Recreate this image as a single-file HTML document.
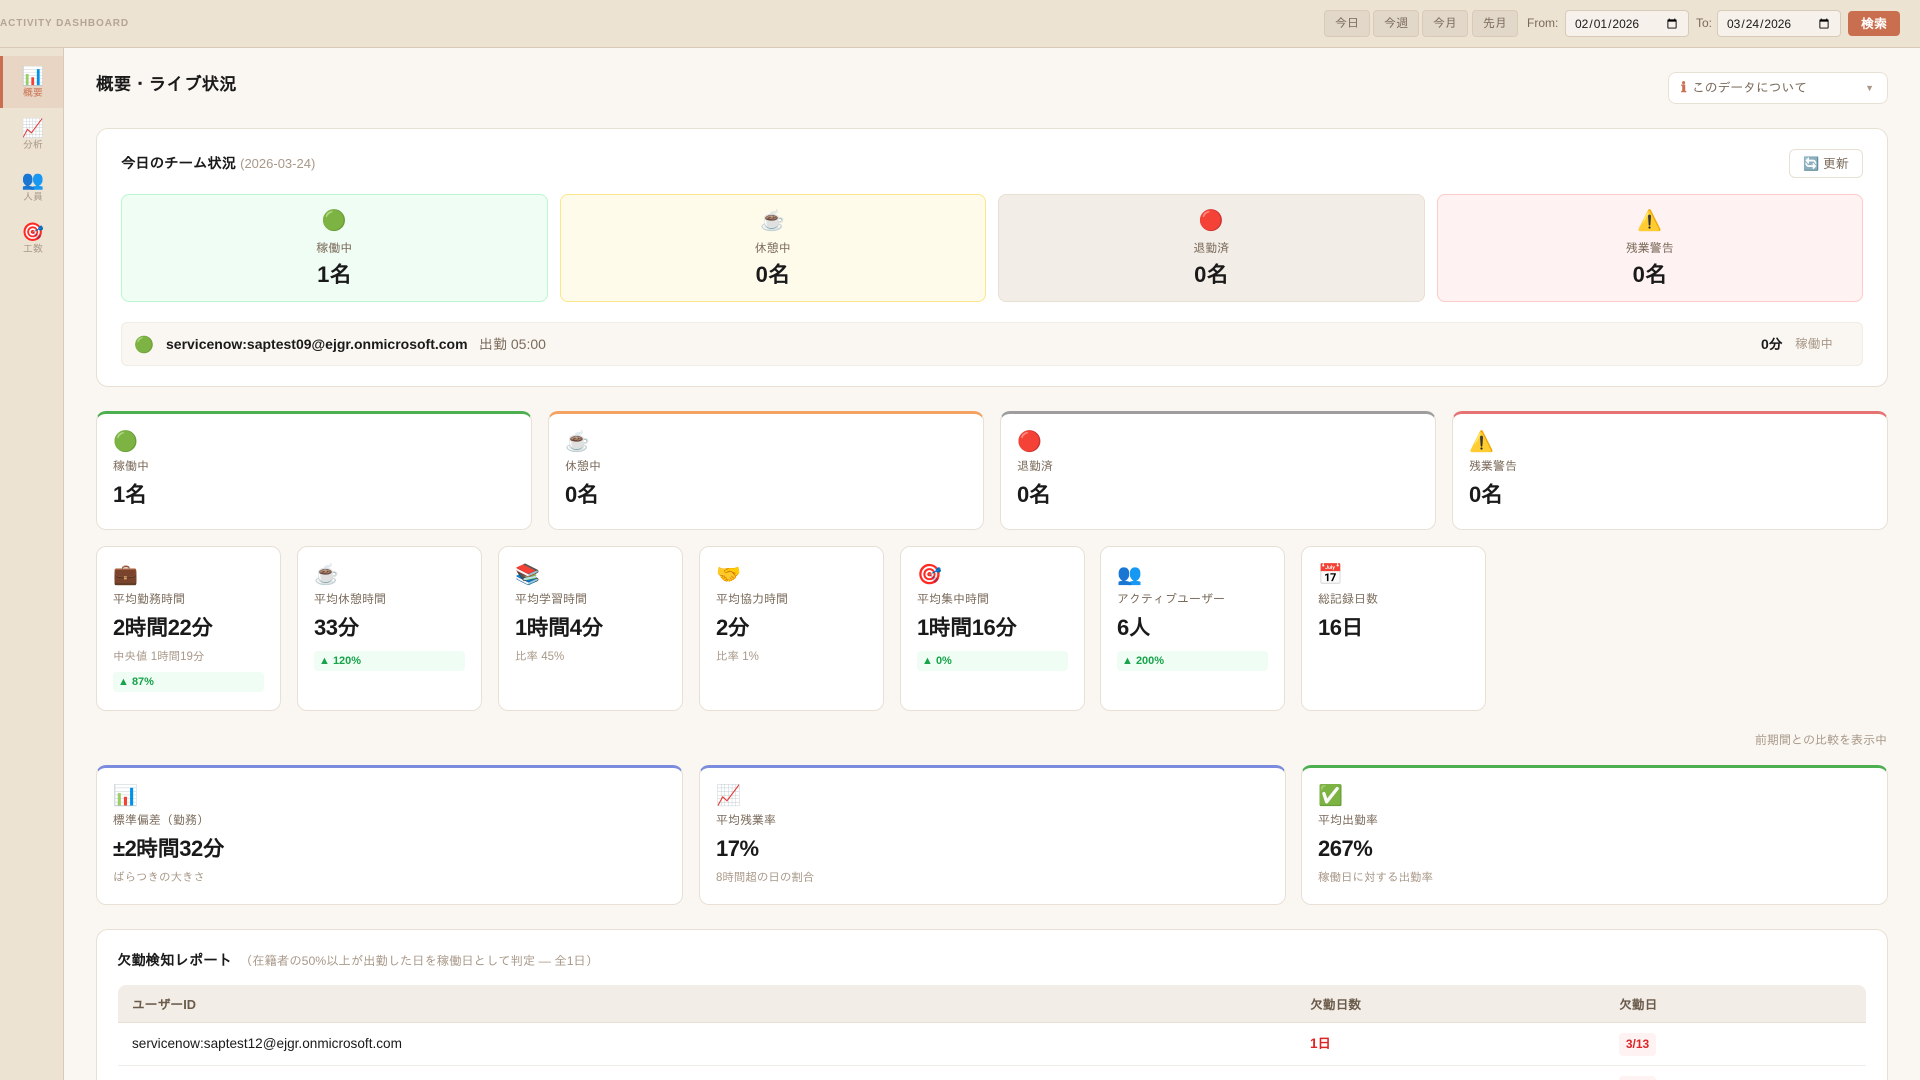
<!DOCTYPE html>
<html lang="ja"><head><meta charset="utf-8"><title>Activity Dashboard</title>
<style>
*{box-sizing:border-box;margin:0;padding:0}
html,body{width:1920px;height:1080px;overflow:hidden;background:#faf7f2}
body{font-family:"Liberation Sans","IPAGothic","WenQuanYi Zen Hei",sans-serif;color:#1a1a1a;position:relative}
.top{position:absolute;left:0;top:0;width:1920px;height:48px;background:#ede3d3;border-bottom:1px solid #d9cbb8}
.brand{position:absolute;left:0;top:17px;font-size:10px;line-height:13px;font-weight:700;letter-spacing:.88px;color:#b5a594}
.qb{position:absolute;top:10px;width:46px;height:27px;background:#e2d8c9;border:1px solid #d9cbb8;border-radius:4px;font-size:12px;line-height:25px;text-align:center;color:#7a6a5a}
.lbl{position:absolute;top:16px;font-size:12px;line-height:15px;color:#7a6a5a}
input[type=date]{position:absolute;top:10px;width:124px;height:27px;background:#f6f1ea;border:1px solid #d9cbb8;border-radius:4px;font:12px "Liberation Sans",sans-serif;color:#1a1a1a;padding:4px 8px}
.go{position:absolute;left:1848px;top:11px;width:52px;height:25px;background:#c96f4f;border-radius:4px;color:#fff;font-size:12.8px;font-weight:700;line-height:25px;text-align:center}
.side{position:absolute;left:0;top:48px;width:64px;height:1032px;background:#ede3d3;border-right:1px solid #d9cbb8}
.nav{position:absolute;left:0;width:63px;height:52px;text-align:center;color:#a89888;font-size:10px;border-left:3px solid transparent}
.nav.on{background:#e8d5c4;border-left-color:#c96f4f;color:#c96f4f;font-weight:600}
.nav i{display:block;font-style:normal;font-size:18px;line-height:24px;padding-top:8px;height:32px}
.nav span{display:block;line-height:12px;margin-top:0}
.h1{position:absolute;left:96px;top:72px;font-size:17.6px;line-height:24px;font-weight:700}
.info{position:absolute;left:1668px;top:72px;width:220px;height:32px;background:#fff;border:1px solid #e8e0d5;border-radius:8px;font-size:12.8px;line-height:30px;color:#7a6a5a}
.info b{position:absolute;left:12px;color:#c96f4f;font-family:"DejaVu Serif",serif;font-size:14px}
.info span{position:absolute;left:23px}
.info em{position:absolute;right:13px;top:0;font-style:normal;font-size:9px;color:#a89888}
.card{position:absolute;background:#fff;border:1px solid #e8e0d5;border-radius:12px}
.t{position:absolute;font-size:14.4px;font-weight:700;line-height:18px}
.t small{font-size:13px;font-weight:400;color:#a89888}
.upd{position:absolute;left:1789px;top:149px;width:74px;height:29px;background:#fff;border:1px solid #e8e0d5;border-radius:6px;font-size:13px;line-height:27px;text-align:center;color:#7a6a5a}
.tile{position:absolute;top:194px;height:108px;width:426.5px;border-radius:8px;border:1px solid;text-align:center}
.tile i{display:block;font-style:normal;font-size:20px;line-height:26px;margin-top:13px;height:29px}
.tile p{font-size:12px;line-height:15px;color:#7a6a5a;margin-top:4px}
.tile div{font-size:22px;font-weight:700;line-height:26px;margin-top:6px}
.row{position:absolute;left:121px;top:322px;width:1742px;height:44px;background:#faf7f2;border:1px solid #f1ece5;border-radius:6px}
.row span{position:absolute;top:13px;line-height:17px;font-size:14px}
.c{position:absolute;background:#fff;border:1px solid #e8e0d5;border-radius:10px;padding:16px}
.c.bar{border-top:3px solid}
.c i{display:block;font-style:normal;font-size:20px;line-height:24px;height:28px}
.c p{font-size:12px;line-height:15px;color:#7a6a5a;margin-top:1px}
.c h3{font-size:22px;letter-spacing:-.5px;line-height:29px;font-weight:700;margin-top:6px}
.c small{display:block;font-size:11.5px;line-height:13px;color:#a89888;margin-top:9px}
.tr{display:block;height:20px;border-radius:4px;background:#f0fdf4;color:#16a34a;font-size:11px;font-weight:700;line-height:20px;padding-left:5px;margin-top:9px}
.c small + .tr{margin-top:8px}
.note{position:absolute;right:33px;top:733px;font-size:12px;line-height:15px;color:#a89888}
.th{position:absolute;left:118px;top:985px;width:1748px;height:38px;background:#f2ede6;border-bottom:1px solid #e8e0d5;border-radius:8px 8px 0 0}
.th b,.cell{position:absolute;font-size:12.8px;line-height:15px}
.th b{top:12px;color:#6b5b4b}
.line{position:absolute;left:118px;top:1065px;width:1748px;height:1px;background:#efebe6}
.bad{position:absolute;left:1619px;width:37px;height:23px;background:#fef2f2;border-radius:4px;color:#dc2626;font-size:12px;font-weight:700;line-height:23px;text-align:center}
</style></head><body>
<div class="top">
<div class="brand">ACTIVITY DASHBOARD</div>
<div class="qb" style="left:1324px">今日</div><div class="qb" style="left:1373px">今週</div><div class="qb" style="left:1422px">今月</div><div class="qb" style="left:1472px">先月</div>
<div class="lbl" style="left:1527px">From:</div>
<input type="date" value="2026-02-01" style="left:1565px">
<div class="lbl" style="left:1696px">To:</div>
<input type="date" value="2026-03-24" style="left:1717px">
<div class="go">検索</div>
</div>
<div class="side">
<div class="nav on" style="top:8px"><i>📊</i><span>概要</span></div>
<div class="nav" style="top:60px"><i>📈</i><span>分析</span></div>
<div class="nav" style="top:112px"><i>👥</i><span>人員</span></div>
<div class="nav" style="top:164px"><i>🎯</i><span>工数</span></div>
</div>
<div class="h1">概要・ライブ状況</div>
<div class="info"><b>&#x2139;&#xFE0E;</b><span>このデータについて</span><em>▼</em></div>

<div class="card" style="left:96px;top:128px;width:1792px;height:259px"></div>
<div class="t" style="left:121px;top:155px">今日のチーム状況 <small>(2026-03-24)</small></div>
<div class="upd">🔄 更新</div>
<div class="tile" style="left:121px;background:#f0fdf4;border-color:#bbf7d0"><i>🟢</i><p>稼働中</p><div>1名</div></div>
<div class="tile" style="left:559.5px;background:#fffbeb;border-color:#fde68a"><i>☕</i><p>休憩中</p><div>0名</div></div>
<div class="tile" style="left:998px;background:#f2ede6;border-color:#e8e0d5"><i>🔴</i><p>退勤済</p><div>0名</div></div>
<div class="tile" style="left:1436.5px;background:#fef2f2;border-color:#fecaca"><i>⚠️</i><p>残業警告</p><div>0名</div></div>
<div class="row">
<span style="left:12px;top:13px;font-size:16px;line-height:20px">🟢</span>
<span style="left:44px;font-weight:700">servicenow:saptest09@ejgr.onmicrosoft.com</span>
<span style="left:357px;color:#7a6a5a">出勤 05:00</span>
<span style="left:1639px;font-weight:700">0分</span>
<span style="left:1673px;font-size:12.7px;color:#a89888">稼働中</span>
</div>

<div class="c bar" style="left:96px;top:411px;width:436px;height:119px;border-top-color:#4caf50"><i>🟢</i><p>稼働中</p><h3>1名</h3></div>
<div class="c bar" style="left:548px;top:411px;width:436px;height:119px;border-top-color:#f4a261"><i>☕</i><p>休憩中</p><h3>0名</h3></div>
<div class="c bar" style="left:1000px;top:411px;width:436px;height:119px;border-top-color:#9e9e9e"><i>🔴</i><p>退勤済</p><h3>0名</h3></div>
<div class="c bar" style="left:1452px;top:411px;width:436px;height:119px;border-top-color:#e57373"><i>⚠️</i><p>残業警告</p><h3>0名</h3></div>

<div class="c" style="left:96px;top:546px;width:185px;height:165px"><i>💼</i><p>平均勤務時間</p><h3>2時間22分</h3><small>中央値 1時間19分</small><span class="tr">▲ 87%</span></div>
<div class="c" style="left:297px;top:546px;width:185px;height:165px"><i>☕</i><p>平均休憩時間</p><h3>33分</h3><span class="tr">▲ 120%</span></div>
<div class="c" style="left:498px;top:546px;width:185px;height:165px"><i>📚</i><p>平均学習時間</p><h3>1時間4分</h3><small>比率 45%</small></div>
<div class="c" style="left:699px;top:546px;width:185px;height:165px"><i>🤝</i><p>平均協力時間</p><h3>2分</h3><small>比率 1%</small></div>
<div class="c" style="left:900px;top:546px;width:184.5px;height:165px"><i>🎯</i><p>平均集中時間</p><h3>1時間16分</h3><span class="tr">▲ 0%</span></div>
<div class="c" style="left:1100px;top:546px;width:185px;height:165px"><i>👥</i><p>アクティブユーザー</p><h3>6人</h3><span class="tr">▲ 200%</span></div>
<div class="c" style="left:1301px;top:546px;width:185px;height:165px"><i>📅</i><p>総記録日数</p><h3>16日</h3></div>

<div class="note">前期間との比較を表示中</div>

<div class="c bar" style="left:96px;top:765px;width:587px;height:140px;border-top-color:#7b8cde"><i>📊</i><p>標準偏差（勤務）</p><h3>±2時間32分</h3><small>ばらつきの大きさ</small></div>
<div class="c bar" style="left:699px;top:765px;width:587px;height:140px;border-top-color:#7b8cde"><i>📈</i><p>平均残業率</p><h3>17%</h3><small>8時間超の日の割合</small></div>
<div class="c bar" style="left:1301px;top:765px;width:587px;height:140px;border-top-color:#4caf50"><i>✅</i><p>平均出勤率</p><h3>267%</h3><small>稼働日に対する出勤率</small></div>

<div class="card" style="left:96px;top:929px;width:1792px;height:200px"></div>
<div class="t" style="left:117px;top:952px">欠勤検知レポート <small style="font-size:12.3px;margin-left:4px">（在籍者の50%以上が出勤した日を稼働日として判定 — 全1日）</small></div>
<div class="th"><b style="left:14px">ユーザーID</b><b style="left:1192px">欠勤日数</b><b style="left:1501px">欠勤日</b></div>
<div class="cell" style="left:132px;top:1036px;font-size:13.6px">servicenow:saptest12@ejgr.onmicrosoft.com</div>
<div class="cell" style="left:1310px;top:1036px;font-size:13.6px;font-weight:700;color:#dc2626">1日</div>
<div class="bad" style="top:1033px">3/13</div>
<div class="line"></div>
<div class="cell" style="left:1310px;top:1079px;font-size:13.6px;font-weight:700;color:#dc2626">1日</div>
<div class="bad" style="top:1076px">3/13</div>
</body></html>
